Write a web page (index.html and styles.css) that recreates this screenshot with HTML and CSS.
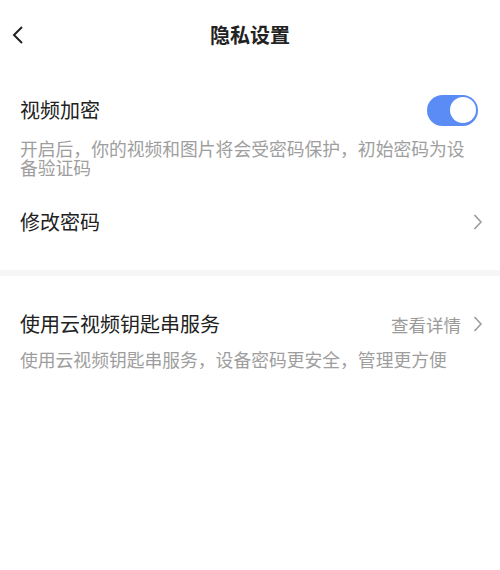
FILE: index.html
```html
<!DOCTYPE html>
<html lang="zh-CN">
<head>
<meta charset="utf-8">
<title>隐私设置</title>
<link rel="stylesheet" href="styles.css">
</head>
<body>
<header class="nav">
  <span class="back">
    <svg width="12" height="18" viewBox="0 0 12 18"><path d="M10 1 L2 9 L10 17" fill="none" stroke="#222" stroke-width="2"/></svg>
  </span>
  <h1 class="title">隐私设置</h1>
</header>

<section class="group">
  <div class="row row-toggle">
    <span class="label">视频加密</span>
    <span class="switch on"><span class="knob"></span></span>
  </div>
  <p class="desc">开启后，你的视频和图片将会受密码保护，初始密码为设备验证码</p>
  <div class="row row-link">
    <span class="label">修改密码</span>
    <svg class="chev" width="9" height="16" viewBox="0 0 9 16"><path d="M1.5 1 L8 8 L1.5 15" fill="none" stroke="#9a9a9a" stroke-width="1.6"/></svg>
  </div>
</section>

<div class="divider"></div>

<section class="group">
  <div class="row row-cloud">
    <span class="label">使用云视频钥匙串服务</span>
    <span class="extra">查看详情
      <svg class="chev" width="9" height="16" viewBox="0 0 9 16"><path d="M1.5 1 L8 8 L1.5 15" fill="none" stroke="#9a9a9a" stroke-width="1.6"/></svg>
    </span>
  </div>
  <p class="desc desc-cloud">使用云视频钥匙串服务，设备密码更安全，管理更方便</p>
</section>
</body>
</html>
```

FILE: styles.css
```css
* { box-sizing: border-box; }
html, body {
  margin: 0;
  padding: 0;
  background: #fff;
  font-family: "Noto Sans CJK SC", "Noto Sans", sans-serif;
  color: #222;
}
.nav {
  position: relative;
  height: 70px;
  display: flex;
  align-items: center;
  justify-content: center;
}
.back {
  position: absolute;
  left: 12px;
  top: 26px;
  display: flex;
}
.title {
  margin: 0;
  font-size: 20px;
  font-weight: 700;
  line-height: 70px;
  color: #222;
}
.group {
  padding: 0 20px;
}
.row {
  display: flex;
  align-items: center;
  justify-content: space-between;
}
.label {
  font-size: 20px;
  line-height: 24px;
  color: #222;
}
.row-toggle {
  margin-top: 20px;
  height: 40px;
}
.switch {
  width: 51px;
  height: 31px;
  border-radius: 16px;
  background: #5b8cf6;
  display: flex;
  align-items: center;
  justify-content: flex-end;
  padding-right: 2px;
  margin-right: 2px;
}
.knob {
  width: 26px;
  height: 26px;
  border-radius: 50%;
  background: #fff;
}
.desc {
  margin: 9px 0 0;
  font-size: 17.8px;
  line-height: 19px;
  color: #9e9e9e;
}
.row-link {
  margin-top: 20px;
  height: 50px;
}
.chev {
  display: block;
  margin-right: -2px;
}
.divider {
  margin-top: 23px;
  height: 6px;
  background: #f6f6f6;
}
.row-cloud {
  margin-top: 24px;
  height: 48px;
}
.extra {
  display: flex;
  align-items: center;
  gap: 12px;
  font-size: 17.5px;
  color: #9a9a9a;
}
.desc-cloud {
  margin-top: 1px;
  line-height: 20px;
}
```
